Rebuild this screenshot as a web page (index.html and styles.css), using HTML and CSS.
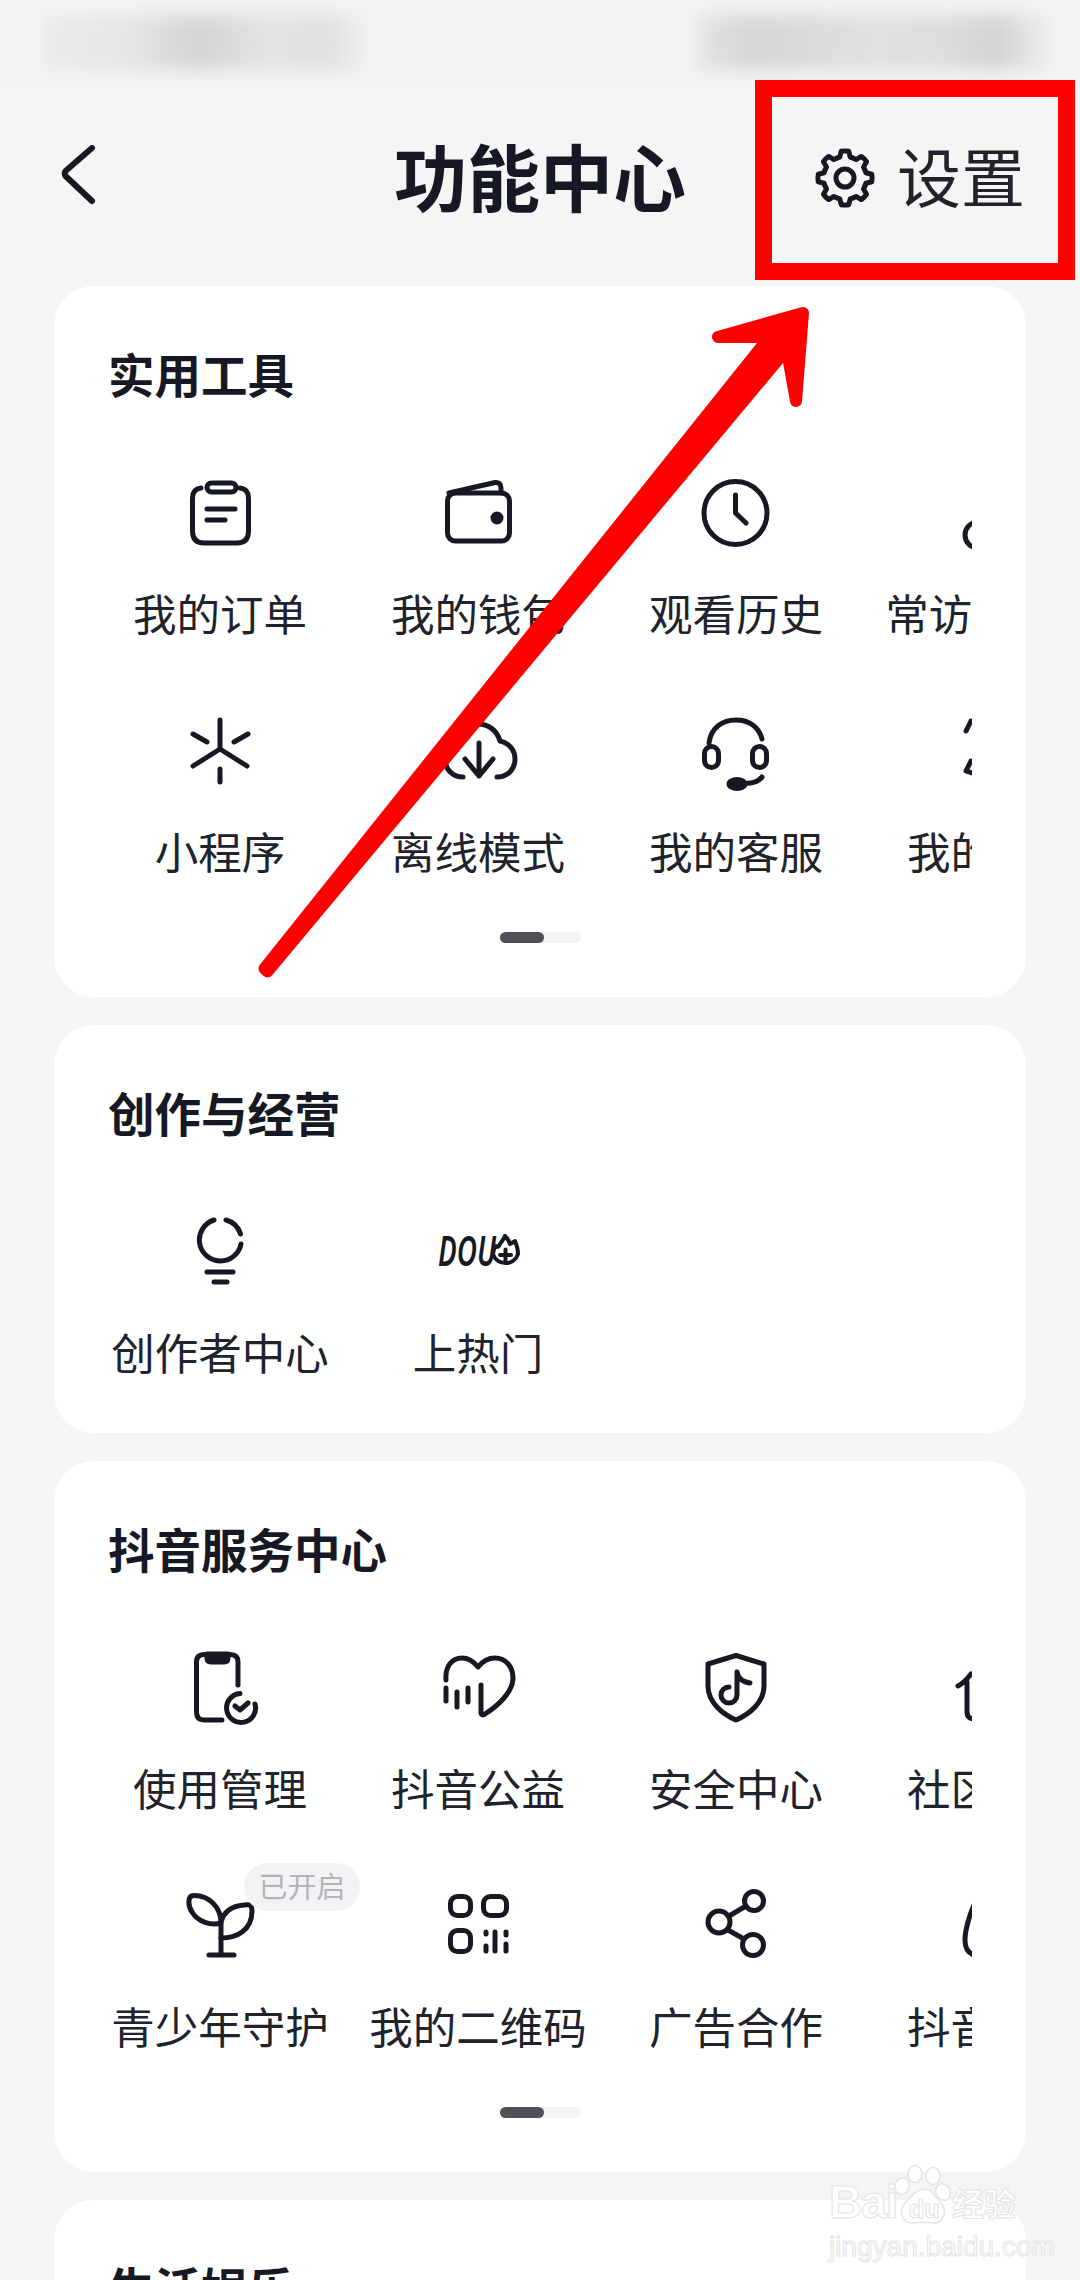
FILE: index.html
```html
<!DOCTYPE html>
<html lang="zh-CN">
<head>
    <title>功能中心</title>
    <meta charset="UTF-8">
    <link rel="stylesheet" href="styles.css">
</head>
<body>
    <div class="status-bar">
        <div class="blur blur-left"></div>
        <div class="blur blur-right"></div>
    </div>

    <header class="nav">
        <div class="nav-back">
            <svg class="back-icon" width="40" height="66" viewBox="0 0 40 66"><path d="M33 3 L6.500 26 Q5 28.500 6.500 31 L33 56"/></svg>
        </div>
        <h1 class="nav-title">功能中心</h1>
        <div class="nav-settings">
            <svg class="ico gear" width="60" height="60" viewBox="0 0 60 60">
                <defs><path id="tooth" d="M21.77 10.14 L24.8 9.14 L26.24 3.26 Q30 2.5 33.76 3.26 L35.2 9.14 L38.23 10.14"/></defs>
                <use href="#tooth"/>
                <use href="#tooth" transform="rotate(45 30 30)"/>
                <use href="#tooth" transform="rotate(90 30 30)"/>
                <use href="#tooth" transform="rotate(135 30 30)"/>
                <use href="#tooth" transform="rotate(180 30 30)"/>
                <use href="#tooth" transform="rotate(225 30 30)"/>
                <use href="#tooth" transform="rotate(270 30 30)"/>
                <use href="#tooth" transform="rotate(315 30 30)"/>
                <circle cx="30" cy="30" r="9"/>
            </svg>
            <span>设置</span>
        </div>
    </header>

    <main class="cards">
        <section class="card">
            <h2 class="card-title">实用工具</h2>
            <div class="grid">
                <div class="item">
                    <svg class="ico" viewBox="0 0 80 80"><path d="M21 15 Q12.5 16 12.5 25 V58 Q12.5 70 24 70 H57 Q68.5 70 68.5 58 V25 Q68.5 16 60 15"/><rect x="27" y="10" width="29" height="9" rx="4.5"/><path d="M27 36 H55 M27 47 H45"/></svg>
                    <div class="label">我的订单</div>
                </div>
                <div class="item">
                    <svg class="ico" viewBox="0 0 80 80"><rect x="9.5" y="20" width="62" height="48" rx="8"/><path d="M11 20 L57 9.5 Q63 9 63 15 V20"/><circle class="solid" cx="59" cy="45" r="4"/></svg>
                    <div class="label">我的钱包</div>
                </div>
                <div class="item">
                    <svg class="ico" viewBox="0 0 80 80"><circle cx="39.5" cy="40" r="31.5"/><path d="M39.5 22 V40 L50 50"/></svg>
                    <div class="label">观看历史</div>
                </div>
                <div class="item">
                    <svg class="ico" viewBox="0 0 80 80"><circle cx="24" cy="62" r="13"/></svg>
                    <div class="label">常访问的人</div>
                </div>
                <div class="item">
                    <svg class="ico" viewBox="0 0 80 80"><path d="M40 9 V38 L13 55 M40 38 L67 55 M13 23 L27 31 M68 23 L54 31 M40 58 V71"/></svg>
                    <div class="label">小程序</div>
                </div>
                <div class="item">
                    <svg class="ico" viewBox="0 0 80 80"><path d="M59 66 C70 66 77 58 77 48 C77 39 71 32 62 30 C59 19 50 13 40 13 C28 13 19 22 18 33 C10 36 6 43 7 50 C8 59 15 66 25 66"/><path d="M41 32 V65 M27 48 L41 65 L55 48"/></svg>
                    <div class="label">离线模式</div>
                </div>
                <div class="item">
                    <svg class="ico" viewBox="0 0 80 80"><path d="M13 32 C15 16 27 9 40 9 C53 9 63 16 66 28"/><rect x="8.5" y="35.5" width="14" height="21" rx="7"/><rect x="56.5" y="35.5" width="14" height="21" rx="7"/><path d="M66 66 C62 72 54 72 44 73"/><ellipse class="solid" cx="41" cy="73" rx="8" ry="4.5"/></svg>
                    <div class="label">我的客服</div>
                </div>
                <div class="item">
                    <svg class="ico" viewBox="0 0 80 80"><path d="M17 10 L12 20 M17 50 L12 60 L18 62"/></svg>
                    <div class="label">我的作品</div>
                </div>
            </div>
            <div class="dots"><span></span></div>
        </section>

        <section class="card">
            <h2 class="card-title">创作与经营</h2>
            <div class="grid">
                <div class="item">
                    <svg class="ico" viewBox="0 0 80 80"><path d="M46 8 A21 21 0 0 1 60.5 22 M61 32 A21 21 0 1 1 34 8 M27 60 H53 M34 70 H47"/></svg>
                    <div class="label">创作者中心</div>
                </div>
                <div class="item">
                    <svg class="ico" viewBox="0 0 80 80">
                        <text class="dou" x="0" y="54" textLength="58" lengthAdjust="spacingAndGlyphs">DOU</text>
                        <path class="thin" d="M58 34 C60 36 61 34 62 32 C64 29 66 27 67 24 C69 26 71 29 72 32 C74 31 76 30 77 29 C79 34 80 38 80 42 A13 12.500 0 0 1 55 42 C55 39 56 36 58 34 Z M62 43 H73 M67.500 37.500 V48.500"/>
                    </svg>
                    <div class="label">上热门</div>
                </div>
            </div>
        </section>

        <section class="card">
            <h2 class="card-title">抖音服务中心</h2>
            <div class="grid">
                <div class="item">
                    <svg class="ico" viewBox="0 0 80 80"><path d="M58 37 V14 Q58 6.5 50 6.5 H24 Q16.5 6.5 16.5 14 V64 Q16.5 72 24 72 H42"/><path class="solid" d="M27 6 H48 V10 Q48 14 44 14 H31 Q27 14 27 10 Z"/><path d="M60 45.5 A14.5 14.5 0 1 0 75 56 M55 58 L60 62 L68 55"/></svg>
                    <div class="label">使用管理</div>
                </div>
                <div class="item">
                    <svg class="ico" viewBox="0 0 80 80"><path d="M8 32 C7 18 14 10 24 10 C31 10 36 14 40 19 C44 14 50 10 57 10 C68 10 75 19 75 30 C75 45 58 59 47 66 C45 68 43 67 43 64 V37 M8 40 V53 M19 44 V59 M30 40 V54"/></svg>
                    <div class="label">抖音公益</div>
                </div>
                <div class="item">
                    <svg class="ico" viewBox="0 0 80 80"><path d="M40 7.5 L68 16 V38 C68 54 54 66 40 72 C26 66 12 54 12 38 V16 Z"/><path d="M41 24 V47 A8 8 0 1 1 33 39 M41 24 C42 30 47 34 54 35"/></svg>
                    <div class="label">安全中心</div>
                </div>
                <div class="item">
                    <svg class="ico" viewBox="0 0 80 80"><path d="M4 38 C8 36 14 30 17 26 M13 34 V64 Q13 70 19 71"/></svg>
                    <div class="label">社区公约</div>
                </div>
                <div class="item">
                    <svg class="ico" viewBox="0 0 80 80"><path d="M41 38 V69 M29 69 H54"/><path d="M41 37 C41 22 30 9.500 14 9.500 C7 9.500 8 20 12 26 C18 36 31 40 41 37 Z"/><path d="M41 52 C56 52 72 45 72 25 C72 19 70 18 64 19 C52 20 44 25 41 36"/></svg>
                    <div class="label">青少年守护</div>
                    <span class="badge">已开启</span>
                </div>
                <div class="item">
                    <svg class="ico" viewBox="0 0 80 80"><rect x="12.5" y="10.5" width="20" height="19" rx="7"/><rect x="45.5" y="10.5" width="23" height="19" rx="7"/><rect x="12.5" y="44.5" width="20" height="21" rx="7"/><path d="M48 46 V48 M48 60 V65 M57 46 V65 M68 46 V49 M68 58 V65"/></svg>
                    <div class="label">我的二维码</div>
                </div>
                <div class="item">
                    <svg class="ico" viewBox="0 0 80 80"><circle cx="58" cy="15" r="9.5"/><circle cx="23" cy="36" r="11"/><circle cx="57" cy="59" r="10.5"/><path d="M33 30 L50 20 M32 44 L48 53"/></svg>
                    <div class="label">广告合作</div>
                </div>
                <div class="item">
                    <svg class="ico" viewBox="0 0 80 80"><path d="M20 19 C15 30 11 45 11 54 C11 62 14 67 20 69"/></svg>
                    <div class="label">抖音商城</div>
                </div>
            </div>
            <div class="dots"><span></span></div>
        </section>

        <section class="card">
            <h2 class="card-title">生活娱乐</h2>
        </section>
    </main>

    <!-- annotation drawn on top of the screenshot -->
    <div class="red-box"></div>
    <svg class="arrow" width="1080" height="2280" viewBox="0 0 1080 2280"><polygon points="264.5,968.5 769.4,337 718,337 803,313 796,401 786.7,349.2 267.5,971.5"/></svg>

    <div class="watermark">
        <div class="wm-row">
            <span class="wm-bai">Bai</span>
            <svg class="wm-paw" width="60" height="62" viewBox="0 0 60 62">
                <ellipse cx="23" cy="9" rx="7" ry="8.500"/>
                <ellipse cx="41" cy="11" rx="7" ry="8.500"/>
                <ellipse cx="10" cy="21" rx="7" ry="8.500" transform="rotate(20 10 21)"/>
                <ellipse cx="51" cy="27" rx="7" ry="8.500" transform="rotate(-25 51 27)"/>
                <path d="M33 24 C40 24 43 32 49 38 C56 46 51 59 40 58 C34 57 28 57 22 58 C10 59 6 47 13 38 C19 32 25 24 33 24 Z"/>
                <text x="17" y="53">du</text>
            </svg>
            <span class="wm-cn">经验</span>
        </div>
        <div class="wm-url">jingyan.baidu.com</div>
    </div>
</body>
</html>
```

FILE: styles.css
```css
* {
    box-sizing: border-box;
}
body {
    position: relative;
    width: 1080px;
    height: 2280px;
    margin: 0;
    overflow: hidden;
    background-color: #f5f5f5;
    color: #161823;
    font-family: "Noto Sans", "Noto Sans CJK SC", sans-serif;
}

.status-bar {
    display: flex;
    justify-content: space-between;
    height: 89px;
    padding: 15px 30px 19px 44px;
    background-color: #f3f3f5;
}
.blur {
    height: 55px;
    filter: blur(8px);
}
.blur-left {
    width: 322px;
    background: linear-gradient(90deg, #ebebed 0%, #e6e6e8 25%, #d4d4d5 48%, #e3e3e5 70%, #dfdfe1 88%, #efeff1 100%);
}
.blur-right {
    width: 352px;
    background: linear-gradient(90deg, #e4e4e6 0%, #d6d6d8 15%, #e0e0e2 50%, #dddddf 70%, #d3d3d5 85%, #eeeef0 100%);
}

.nav {
    display: grid;
    grid-template-columns: 1fr auto 1fr;
    align-items: center;
    height: 178px;
}
.nav-back {
    padding-left: 59px;
    display: flex;
}
.back-icon {
    fill: none;
    stroke: #161823;
    stroke-width: 6;
    stroke-linecap: round;
    stroke-linejoin: round;
}
.nav-title {
    margin: 0;
    font-size: 73px;
    line-height: 90px;
    font-weight: 700;
}
.nav-settings {
    display: flex;
    justify-content: flex-end;
    align-items: center;
    gap: 22px;
    padding-right: 55px;
    font-size: 64px;
    line-height: 80px;
    color: #20222c;
}
.gear {
    stroke-width: 3.5;
    stroke: #20222c;
}

.cards {
    display: flex;
    flex-direction: column;
    gap: 28px;
    padding: 19px 54px 0;
}
.card {
    flex: none;
    background-color: #fff;
    border-radius: 40px;
}
.card-title {
    margin: 0 0 63px;
    padding: 59px 0 0 54px;
    font-size: 46.5px;
    line-height: 60px;
    font-weight: 700;
}

.grid {
    display: grid;
    grid-template-columns: repeat(4, 258px);
    grid-auto-rows: 171px;
    row-gap: 67px;
    width: 881px;
    margin-left: 37px;
    padding: 5px 0 50px;
    overflow: hidden;
}
.item {
    position: relative;
    display: flex;
    flex-direction: column;
    align-items: center;
}
.ico {
    flex: none;
    width: 80px;
    height: 80px;
    margin-bottom: 31px;
    overflow: visible;
    fill: none;
    stroke: #161823;
    stroke-width: 5;
    stroke-linecap: round;
    stroke-linejoin: round;
}
.ico .solid {
    fill: #161823;
}
.ico .thin {
    stroke-width: 4;
}
.ico .dou {
    fill: #161823;
    stroke: none;
    font-family: "Noto Sans", sans-serif;
    font-style: italic;
    font-weight: 600;
    font-size: 41px;
}
.gear.ico {
    width: 60px;
    height: 60px;
    margin-bottom: 0;
}
.label {
    font-size: 43.5px;
    line-height: 60px;
    white-space: nowrap;
    color: #20222c;
}
.badge {
    position: absolute;
    left: 153px;
    top: -23px;
    width: 116px;
    height: 48px;
    border-radius: 24px;
    background-color: #f3f3f5;
    color: #b4b4b9;
    font-size: 29px;
    line-height: 48px;
    text-align: center;
    white-space: nowrap;
}

.dots {
    width: 81px;
    height: 11px;
    margin: 0 auto;
    padding-bottom: 54px;
    box-sizing: content-box;
    position: relative;
}
.dots::before {
    content: "";
    display: block;
    height: 11px;
    border-radius: 6px;
    background-color: #f3f3f5;
}
.dots span {
    position: absolute;
    left: 0;
    top: 0;
    width: 44px;
    height: 11px;
    border-radius: 6px;
    background-color: #505058;
}

.red-box {
    position: absolute;
    left: 755px;
    top: 80px;
    width: 320px;
    height: 200px;
    border: 17px solid #ff0000;
}
.arrow {
    position: absolute;
    left: 0;
    top: 0;
    fill: #ff0000;
    stroke: #ff0000;
    stroke-width: 12;
    stroke-linejoin: round;
}

.watermark {
    position: absolute;
    left: 829px;
    top: 2165px;
    width: 196px;
    color: #fff;
    font-family: "Liberation Sans", "Noto Sans CJK SC", sans-serif;
    -webkit-text-stroke: 1px #e4e4e4;
}
.wm-row {
    display: flex;
    align-items: flex-end;
    height: 62px;
}
.wm-bai {
    width: 63px;
    font-size: 46px;
    line-height: 50px;
    font-weight: 700;
    letter-spacing: -1px;
}
.wm-paw {
    flex: none;
    fill: #fff;
    stroke: #e4e4e4;
    stroke-width: 1.5;
}
.wm-paw text {
    font-size: 25px;
    font-weight: 700;
    stroke-width: 1;
}
.wm-cn {
    font-size: 32px;
    line-height: 44px;
    font-weight: 700;
}
.wm-url {
    margin-top: 4px;
    font-size: 28px;
    line-height: 32px;
    white-space: nowrap;
    -webkit-text-stroke-width: 1px;
}
```
